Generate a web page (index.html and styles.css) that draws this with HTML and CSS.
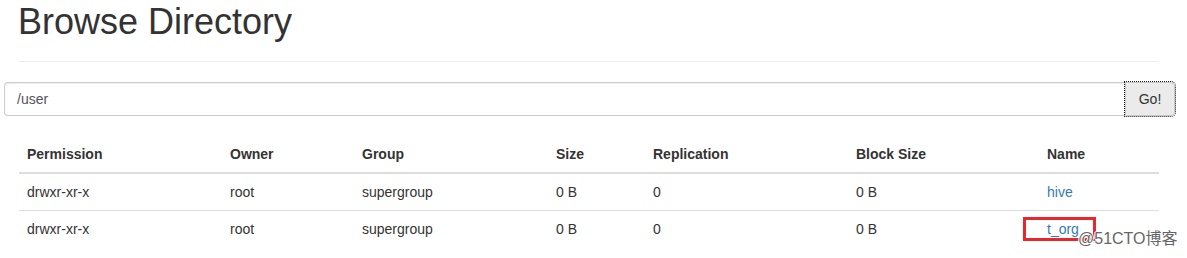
FILE: index.html
```html
<!DOCTYPE html>
<html lang="en">
<head>
<meta charset="utf-8">
<title>Browse Directory</title>
<link rel="stylesheet" href="styles.css">
</head>
<body>
<div class="container">
  <div class="page-header">
    <h1>Browse Directory</h1>
  </div>
</div>
<form class="input-group">
  <input class="form-control" type="text" value="/user">
  <button class="btn" type="button">Go!</button>
</form>
<div class="container">
  <table class="table">
    <thead>
      <tr>
        <th class="c-perm">Permission</th>
        <th class="c-owner">Owner</th>
        <th class="c-group">Group</th>
        <th class="c-size">Size</th>
        <th class="c-repl">Replication</th>
        <th class="c-block">Block Size</th>
        <th class="c-name">Name</th>
      </tr>
    </thead>
    <tbody>
      <tr>
        <td>drwxr-xr-x</td>
        <td>root</td>
        <td>supergroup</td>
        <td>0 B</td>
        <td>0</td>
        <td>0 B</td>
        <td><a href="#">hive</a></td>
      </tr>
      <tr>
        <td>drwxr-xr-x</td>
        <td>root</td>
        <td>supergroup</td>
        <td>0 B</td>
        <td>0</td>
        <td>0 B</td>
        <td><a href="#">t_org</a></td>
      </tr>
    </tbody>
  </table>
</div>
<div class="highlight"></div>
<div class="watermark">@51CTO博客</div>
</body>
</html>
```

FILE: styles.css
```css
html, body {
  margin: 0;
  padding: 0;
  background: #fff;
}
body {
  font-family: "Liberation Sans", Arial, Helvetica, sans-serif;
  font-size: 14px;
  line-height: 20px;
  color: #333;
  position: relative;
  width: 1187px;
  height: 258px;
  overflow: hidden;
}
.container {
  margin-left: 19px;
  width: 1140px;
}
.page-header {
  padding-bottom: 9px;
  border-bottom: 1px solid #eee;
  margin: 0 0 20px;
}
.page-header h1 {
  margin: 2px 0 10px -1px;
  font-size: 36px;
  line-height: 39.6px;
  font-weight: 500;
  color: #333;
}
.input-group {
  display: flex;
  margin: 0 0 20px 4px;
  width: 1171px;
  height: 34px;
}
.form-control {
  flex: 1;
  box-sizing: border-box;
  height: 34px;
  margin: 0;
  padding: 6px 12px;
  font-family: "Liberation Sans", Arial, sans-serif;
  font-size: 14px;
  color: #555;
  border: 1px solid #ccc;
  border-right: 0;
  border-radius: 4px 0 0 4px;
  box-shadow: inset 0 1px 1px rgba(0,0,0,.075);
  outline: none;
}
.btn {
  box-sizing: border-box;
  width: 50px;
  height: 34px;
  margin: 0;
  padding: 6px 12px;
  font-family: "Liberation Sans", Arial, sans-serif;
  font-size: 14px;
  color: #333;
  background: #ebebeb;
  border: 1px solid #c8c8c8;
  border-radius: 0 4px 4px 0;
  outline: 1px dotted #111;
  outline-offset: 0;
}
.table {
  width: 1140px;
  border-collapse: collapse;
  border-spacing: 0;
  table-layout: fixed;
}
.table th, .table td {
  box-sizing: border-box;
  padding: 8px;
  line-height: 20px;
  text-align: left;
  vertical-align: top;
}
.table th {
  font-weight: bold;
  border-bottom: 2px solid #ddd;
}
.table td {
  border-top: 1px solid #ddd;
}
.c-perm { width: 203px; }
.c-owner { width: 132px; }
.c-group { width: 194px; }
.c-size { width: 97px; }
.c-repl { width: 203px; }
.c-block { width: 191px; }
.c-name { width: 120px; }
a {
  color: #337ab7;
  text-decoration: none;
}
.highlight {
  position: absolute;
  left: 1023px;
  top: 217px;
  width: 67px;
  height: 18px;
  border: 3px solid #e8262b;
}
.watermark {
  position: absolute;
  left: 1078px;
  top: 229px;
  font-family: "Liberation Sans", Arial, "Noto Sans CJK SC", sans-serif;
  font-size: 16px;
  line-height: 20px;
  color: #666;
  white-space: nowrap;
  text-shadow: 1px 0 0 #fff, -1px 0 0 #fff, 0 1px 0 #fff, 0 -1px 0 #fff;
}
```
